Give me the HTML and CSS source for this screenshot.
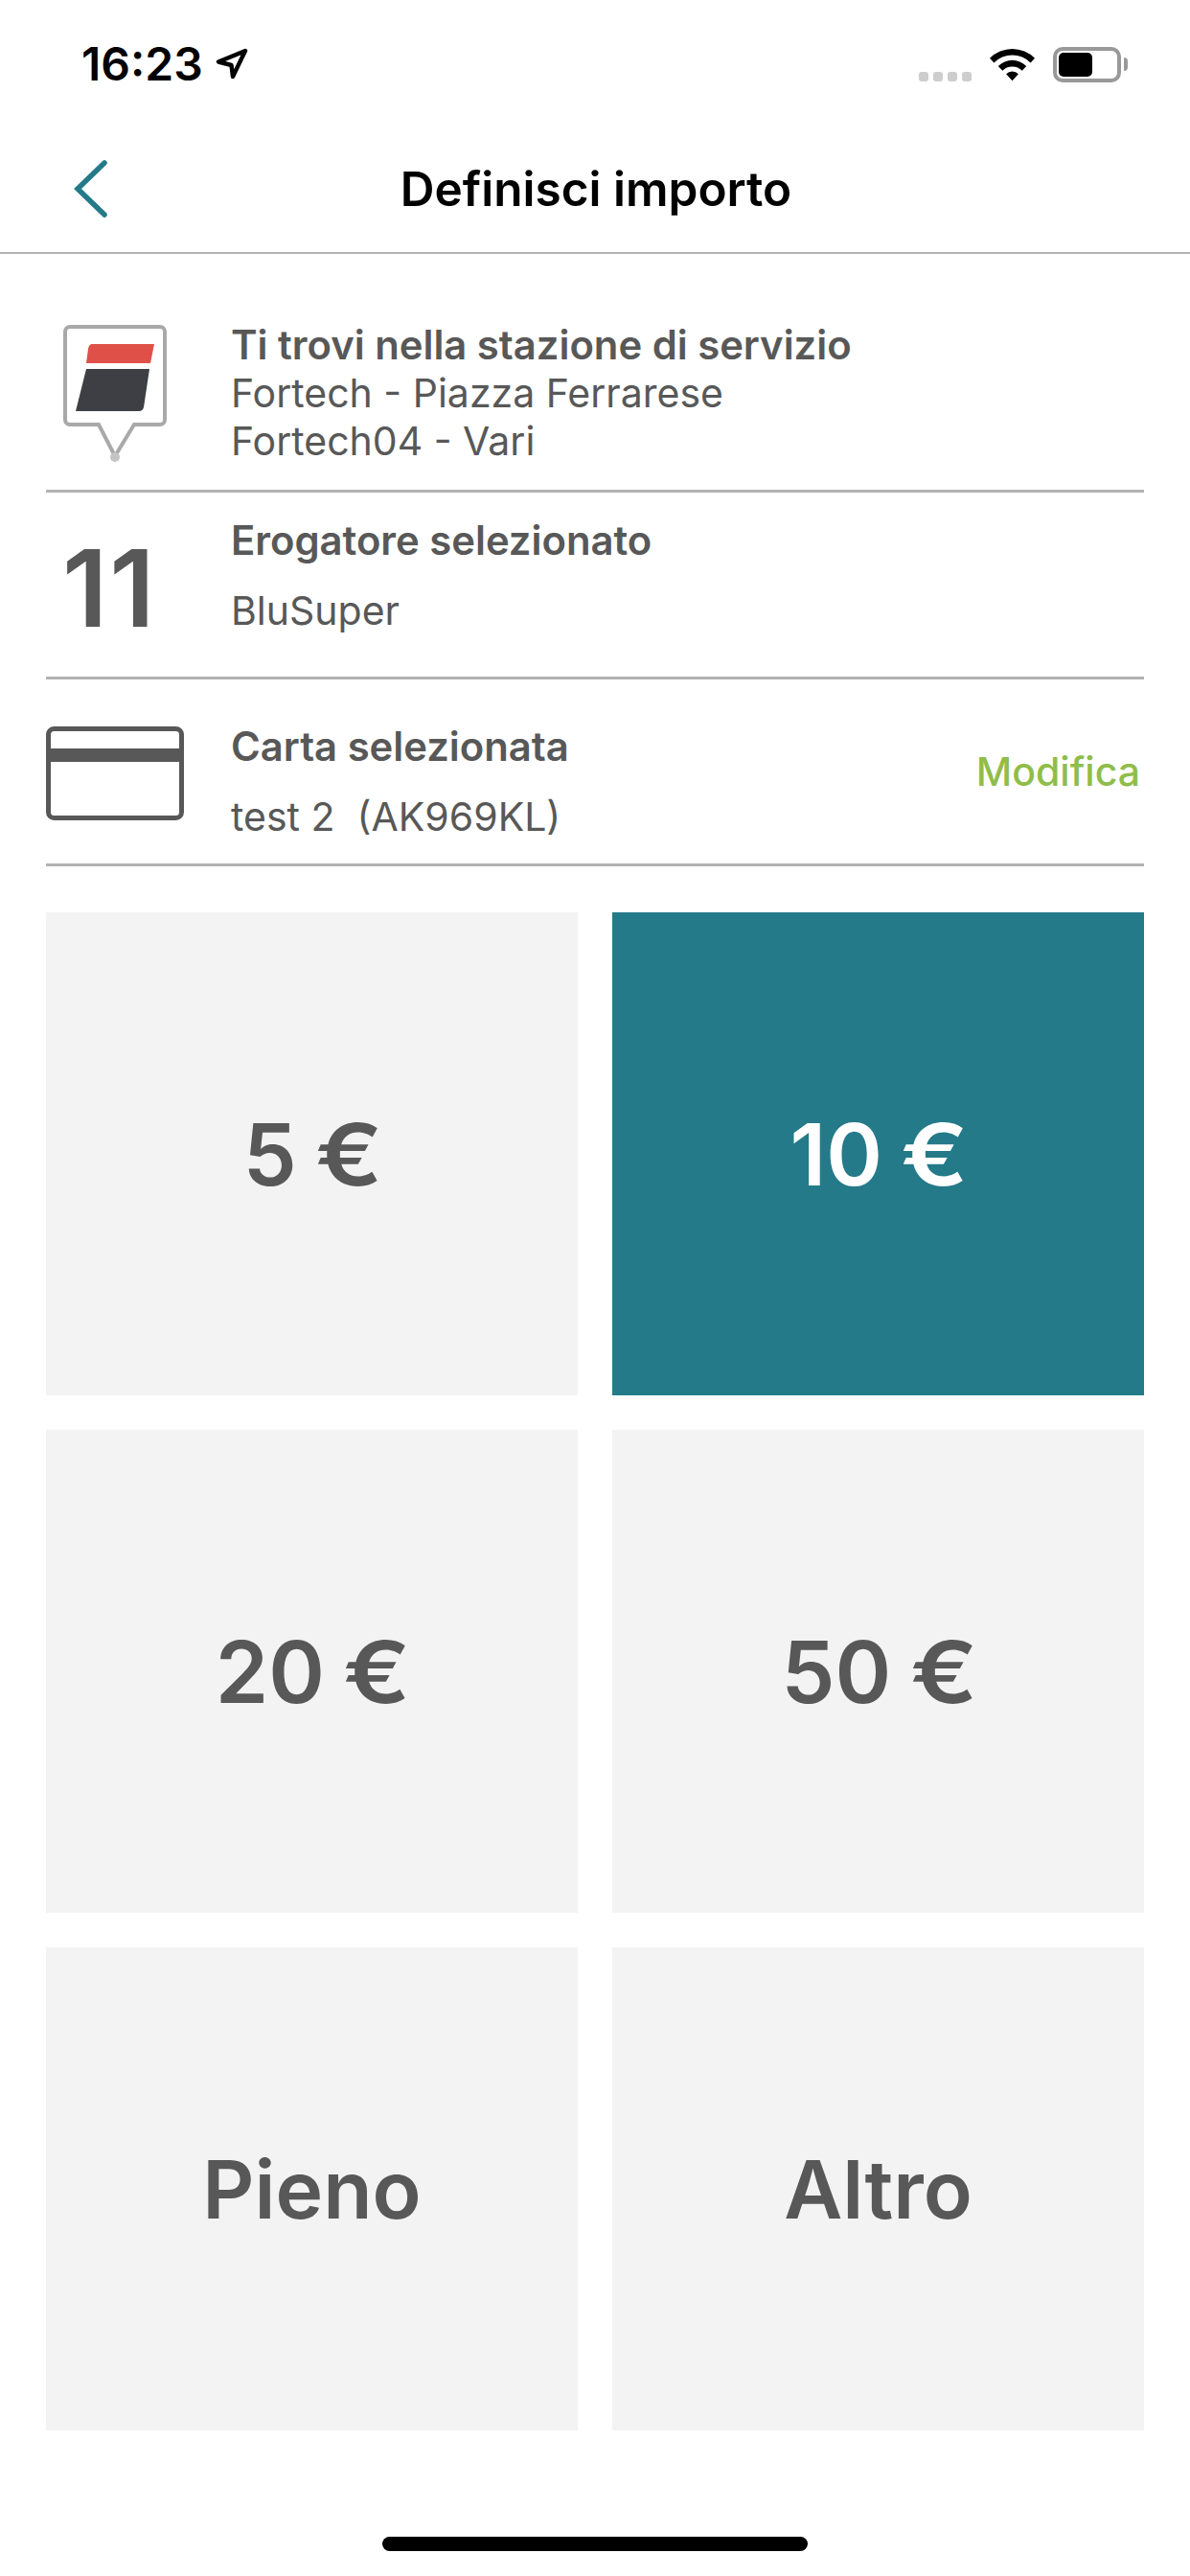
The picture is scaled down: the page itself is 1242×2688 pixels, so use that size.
FILE: index.html
```html
<!DOCTYPE html>
<html lang="it">
<head>
  <meta charset="UTF-8">
  <title>Definisci importo</title>
  <link rel="stylesheet" href="styles.css">
</head>
<body>
  <div class="status">
    <div class="status-left">
      <span class="time">16:23</span>
      <svg class="arrow" width="34" height="34" viewBox="0 0 34 34"><path d="M31 3 L3 14.500 L16.500 18 L18 30 Z" fill="none" stroke="#000" stroke-width="4.400" stroke-linejoin="round"/></svg>
    </div>
    <div class="status-right">
      <div class="signal"><i></i><i></i><i></i><i></i></div>
      <svg class="wifi" width="47" height="36" viewBox="0 0 48 36">
        <path d="M0 11.500 A34 34 0 0 1 48 11.500 L43.500 16.500 A27 27 0 0 0 4.500 16.500 Z" fill="#000"/>
        <path d="M9 20 A21 21 0 0 1 39 20 L34.500 25 A14.500 14.500 0 0 0 13.500 25 Z" fill="#000"/>
        <path d="M17.500 28.500 A9 9 0 0 1 30.500 28.500 L24 35.500 Z" fill="#000"/>
      </svg>
      <div class="battery"><div class="battery-level"></div></div>
      <div class="battery-tip"></div>
    </div>
  </div>

  <div class="nav">
    <svg class="back" width="38" height="64" viewBox="0 0 38 64"><path d="M33 5 L5 32 L33 59" fill="none" stroke="#247a89" stroke-width="5.500" stroke-linecap="round" stroke-linejoin="miter"/></svg>
    <h1 class="title">Definisci importo</h1>
  </div>

  <div class="info">
    <div class="row row-station">
      <div class="row-icon">
        <svg class="pin" width="110" height="144" viewBox="0 0 110 144">
          <path d="M8 3 H102 A5 5 0 0 1 107 8 V100 A5 5 0 0 1 102 105 H75 L55 138 L38 105 H8 A5 5 0 0 1 3 100 V8 A5 5 0 0 1 8 3 Z" fill="#fff" stroke="#a9a9a9" stroke-width="4"/>
          <circle cx="55" cy="139" r="5" fill="#c4c4c4"/>
          <path d="M31 21 H96 L92 41 H25 L27 26 Q28 21 31 21 Z" fill="#df5148"/>
          <path d="M25 47 H91 L85 87 Q84 91 80 91 H14 Z" fill="#3e3f44"/>
        </svg>
      </div>
      <div class="row-text tight">
        <div class="row-title">Ti trovi nella stazione di servizio</div>
        <div class="row-sub">Fortech - Piazza Ferrarese</div>
        <div class="row-sub">Fortech04 - Vari</div>
      </div>
    </div>
    <div class="row row-pump">
      <div class="row-icon pump-number">11</div>
      <div class="row-text">
        <div class="row-title">Erogatore selezionato</div>
        <div class="row-sub">BluSuper</div>
      </div>
    </div>
    <div class="row row-card">
      <div class="row-icon">
        <svg width="144" height="98" viewBox="0 0 144 98">
          <rect x="2.500" y="2.500" width="139" height="93" rx="6" fill="none" stroke="#585858" stroke-width="5"/>
          <rect x="2" y="23" width="140" height="14" fill="#585858"/>
        </svg>
      </div>
      <div class="row-text">
        <div class="row-title">Carta selezionata</div>
        <div class="row-sub">test 2&nbsp; (AK969KL)</div>
      </div>
      <div class="edit">Modifica</div>
    </div>
  </div>

  <div class="amounts">
    <div class="tile amount">5 <span class="cur">€</span></div>
    <div class="tile amount active">10 <span class="cur">€</span></div>
    <div class="tile amount">20 <span class="cur">€</span></div>
    <div class="tile amount">50 <span class="cur">€</span></div>
    <div class="tile">Pieno</div>
    <div class="tile">Altro</div>
  </div>

  <div class="home-bar"></div>
</body>
</html>
```

FILE: styles.css
```css
html, body { margin: 0; padding: 0; }
body {
  width: 1242px;
  height: 2688px;
  overflow: hidden;
  background: #fff;
  font-family: Inter, "Noto Sans", sans-serif;
  color: #585858;
}

/* status bar */
.status {
  height: 132px;
  box-sizing: border-box;
  padding: 44px 65px 0 85px;
  display: flex;
  justify-content: space-between;
  align-items: flex-start;
}
.status-left { display: flex; align-items: center; gap: 13px; }
.time { font-size: 48px; line-height: 46px; font-weight: 600; color: #000; }
.status-right { display: flex; align-items: center; height: 46px; }
.signal { display: flex; gap: 5px; margin: 26px 19px 0 0; }
.signal i { display: block; width: 10px; height: 10px; border-radius: 3px; background: #cdcdcd; }
.wifi { margin-right: 19px; }
.battery {
  width: 71px;
  height: 37px;
  box-sizing: border-box;
  border: 4px solid #999;
  border-radius: 10px;
  padding: 2px;
}
.battery-level { width: 35px; height: 25px; background: #000; border-radius: 5px; }
.battery-tip {
  width: 4px;
  height: 14px;
  margin-left: 3px;
  background: #999;
  border-radius: 0 4px 4px 0;
}

/* nav */
.nav {
  height: 133px;
  box-sizing: border-box;
  border-bottom: 2px solid #b4b4b4;
  display: flex;
  align-items: center;
  justify-content: center;
  position: relative;
}
.back { position: absolute; left: 76px; top: 33px; }
.title { margin: 0 0 2px 2px; font-size: 49.5px; line-height: 56px; font-weight: 600; color: #000; }

/* info rows */
.info { margin: 0 48px; }
.row {
  display: flex;
  align-items: center;
  box-sizing: border-box;
  border-bottom: 3px solid #b2b2b2;
}
.row-station { height: 249px; padding-top: 44px; }
.row-pump, .row-card { height: 195px; }
.row-icon { width: 193px; flex: none; display: flex; }
.row-station .row-icon { padding-left: 17px; width: 176px; }
.row-card .row-icon { margin-top: 4px; }
.pin { filter: blur(0.5px); }
.pump-number {
  font-size: 112px;
  line-height: 104px;
  font-weight: 600;
  padding: 6px 0 0 17px;
  width: 176px;
  letter-spacing: 2px;
}
.row-text { flex: 1; display: flex; flex-direction: column; gap: 23px; }
.row-text.tight { gap: 0; }
.row-pump .row-text { margin-bottom: 19px; }
.row-card .row-text { margin-top: 20px; }
.row-title { font-size: 41.8px; line-height: 50px; font-weight: 600; }
.row-sub { font-size: 41px; line-height: 50px; font-weight: 400; }
.edit { font-size: 41px; font-weight: 500; color: #8fbd4a; margin-right: 4px; }

/* amount tiles */
.amounts {
  margin: 48px 48px 0;
  display: grid;
  grid-template-columns: 555px 555px;
  grid-auto-rows: 504px;
  gap: 36px;
}
.tile {
  background: #f3f3f3;
  display: flex;
  align-items: center;
  justify-content: center;
  font-size: 84px;
  font-weight: 600;
  color: #585858;
  white-space: pre;
}
.tile.amount { font-size: 89px; font-weight: 600; padding-right: 6px; }
.tile.active { background: #247a89; color: #fff; }
.cur { display: inline-block; width: 62px; margin-left: -3px; transform: scaleX(1.17); transform-origin: left center; }

.home-bar {
  width: 444px;
  height: 15px;
  border-radius: 8px;
  background: #000;
  margin: 111px auto 0;
}
```
